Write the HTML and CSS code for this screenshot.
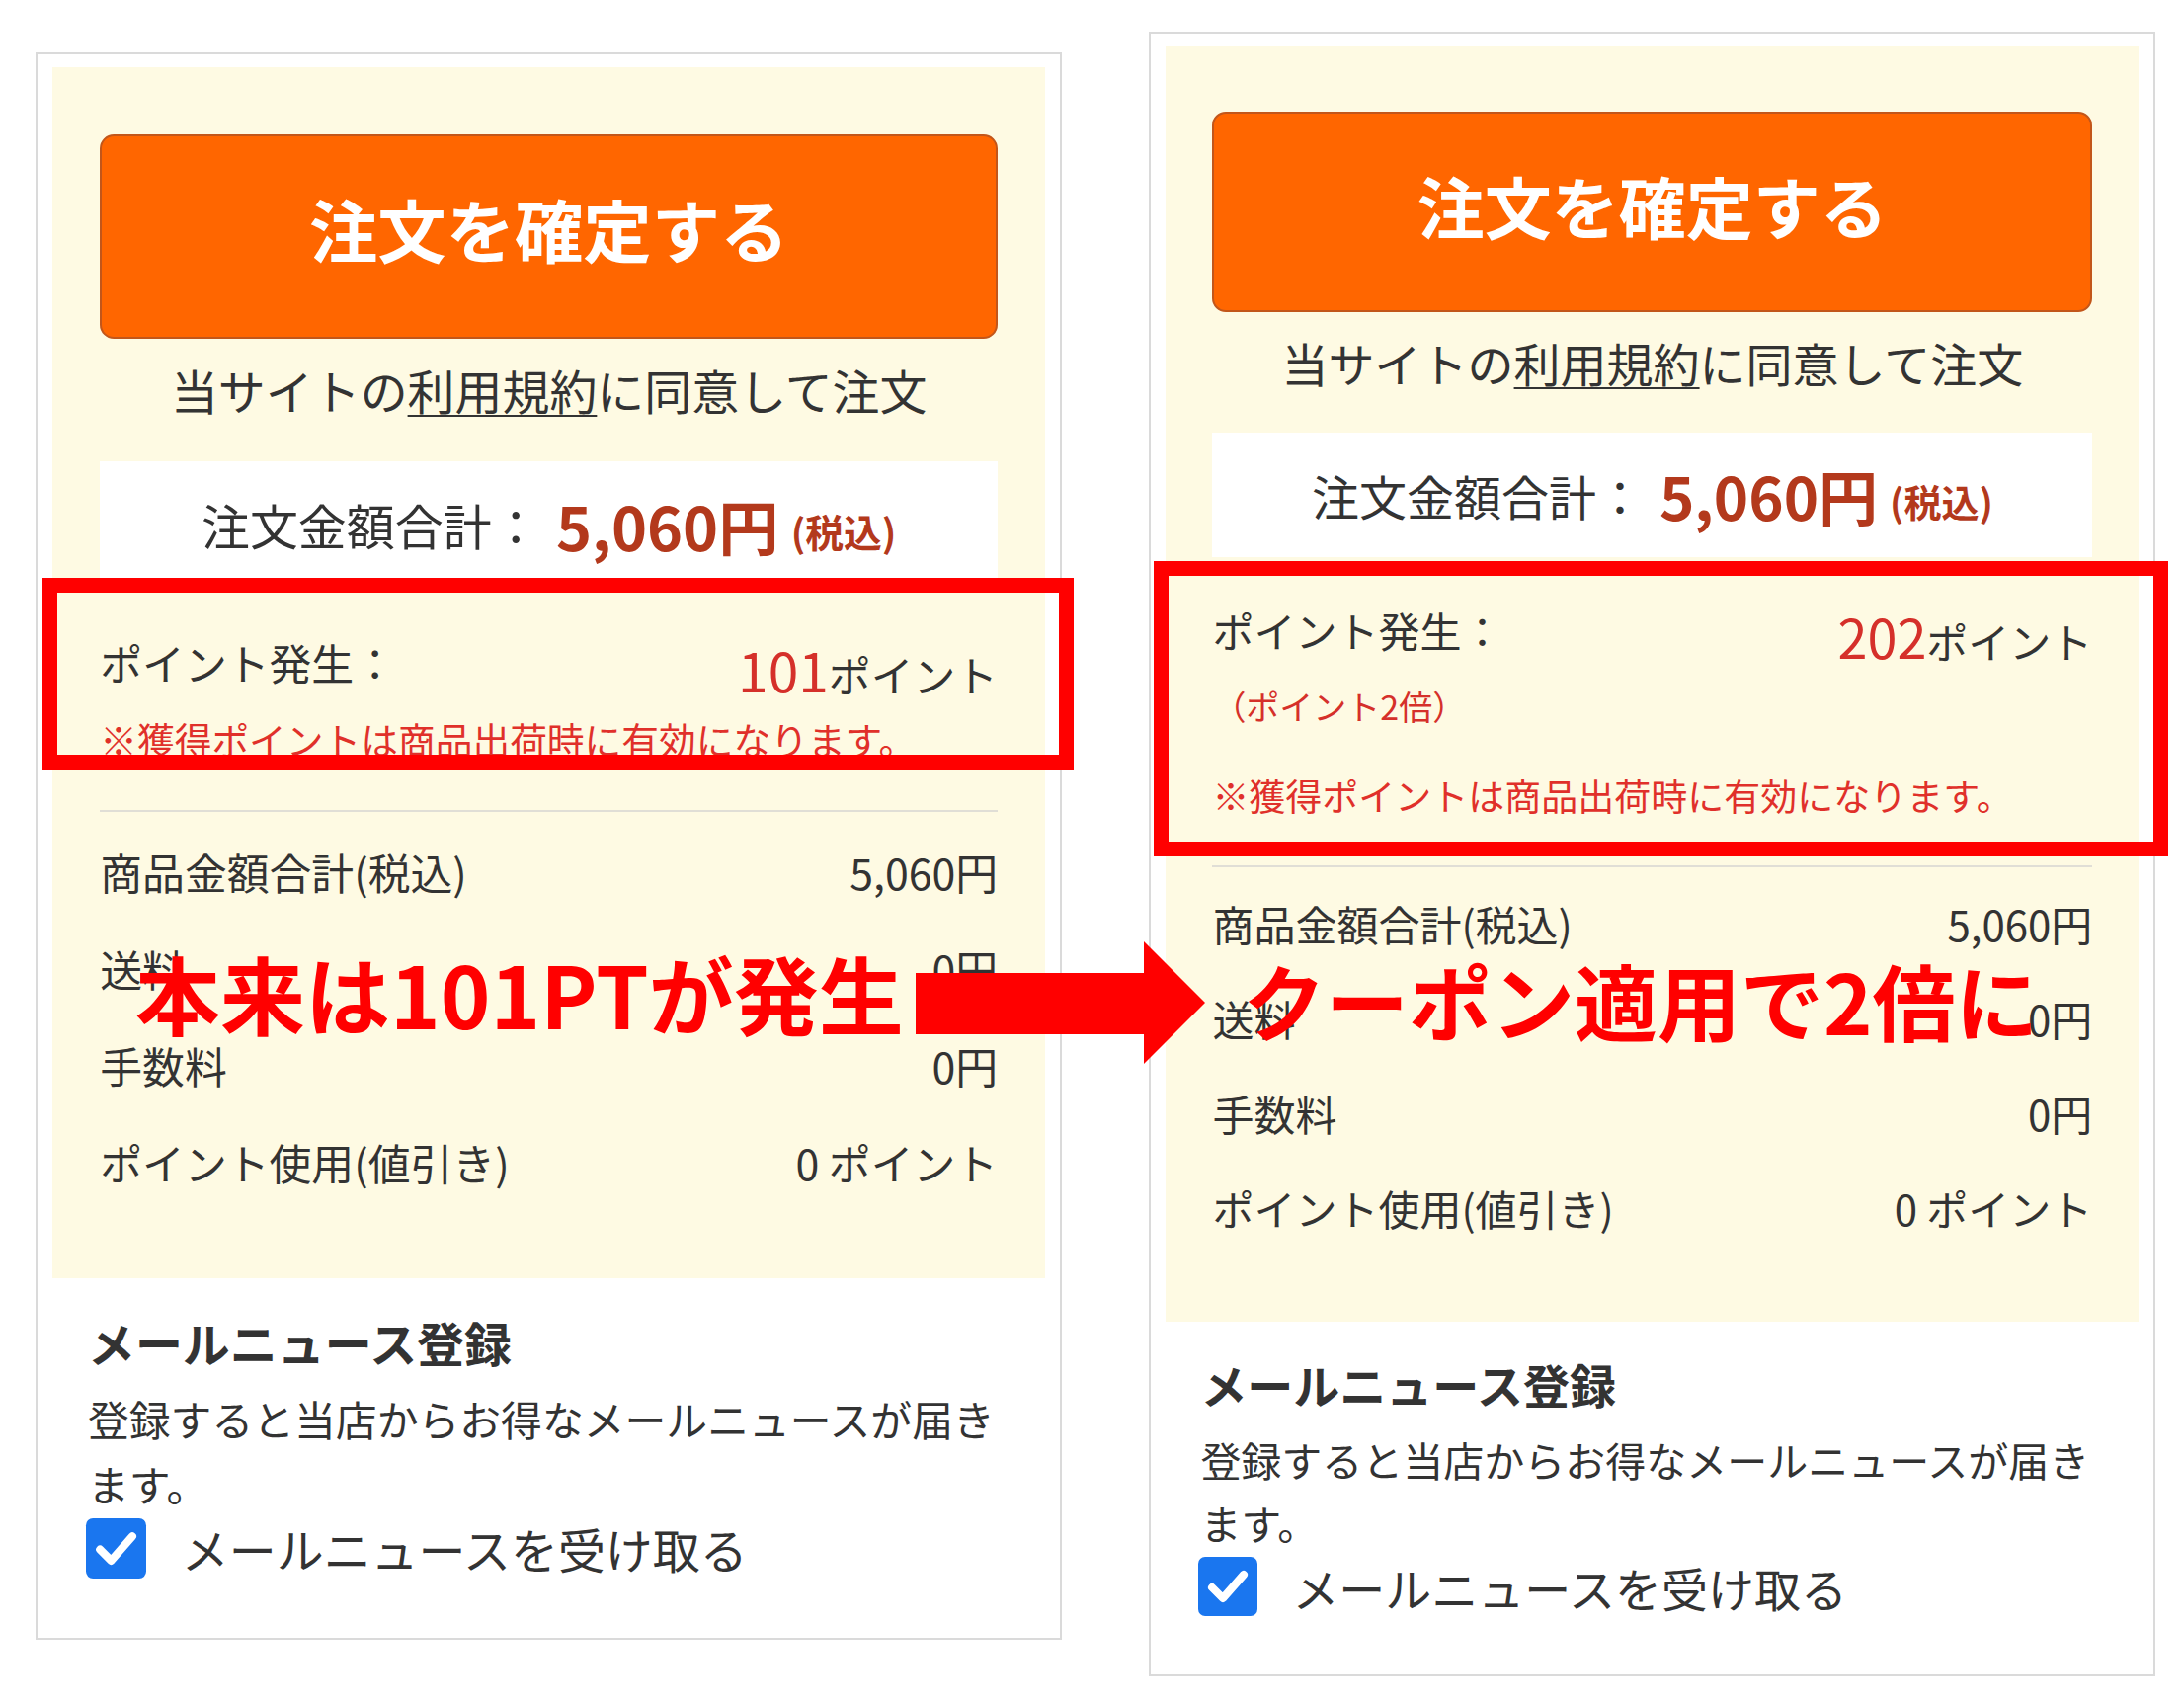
FILE: index.html
```html
<!DOCTYPE html>
<html lang="ja">
<head>
<meta charset="utf-8">
<title>注文確認</title>
<link rel="stylesheet" href="styles.css">
</head>
<body>
<div class="stage">
  <section class="panel panel--a">
    <div class="summary">
      <button class="confirm" type="button">注文を確定する</button>
      <p class="terms">当サイトの<a href="#">利用規約</a>に同意して注文</p>
      <div class="total">注文金額合計：<strong class="total__amount">5,060円</strong><span class="total__tax">(税込)</span></div>
      <div class="points">
        <div class="points__row"><span>ポイント発生：</span><span class="points__value"><em>101</em>ポイント</span></div>
        <p class="points__note">※獲得ポイントは商品出荷時に有効になります。</p>
      </div>
      <dl class="breakdown">
        <div class="breakdown__row"><dt>商品金額合計(税込)</dt><dd>5,060円</dd></div>
        <div class="breakdown__row"><dt>送料</dt><dd>0円</dd></div>
        <div class="breakdown__row"><dt>手数料</dt><dd>0円</dd></div>
        <div class="breakdown__row"><dt>ポイント使用(値引き)</dt><dd>0 ポイント</dd></div>
      </dl>
    </div>
    <div class="mail">
      <h3 class="mail__title">メールニュース登録</h3>
      <p class="mail__text">登録すると当店からお得なメールニュースが届きます。</p>
      <label class="mail__check"><span class="checkbox"><svg viewBox="0 0 60 60" width="60" height="60"><path d="M14 31 L25 42 L46 18" fill="none" stroke="#fff" stroke-width="8" stroke-linecap="round" stroke-linejoin="round"/></svg></span>メールニュースを受け取る</label>
    </div>
  </section>

  <section class="panel panel--b">
    <div class="summary">
      <button class="confirm" type="button">注文を確定する</button>
      <p class="terms">当サイトの<a href="#">利用規約</a>に同意して注文</p>
      <div class="total">注文金額合計：<strong class="total__amount">5,060円</strong><span class="total__tax">(税込)</span></div>
      <div class="points">
        <div class="points__row"><span>ポイント発生：</span><span class="points__value"><em>202</em>ポイント</span></div>
        <p class="points__mult">（ポイント2倍）</p>
        <p class="points__note">※獲得ポイントは商品出荷時に有効になります。</p>
      </div>
      <dl class="breakdown">
        <div class="breakdown__row"><dt>商品金額合計(税込)</dt><dd>5,060円</dd></div>
        <div class="breakdown__row"><dt>送料</dt><dd>0円</dd></div>
        <div class="breakdown__row"><dt>手数料</dt><dd>0円</dd></div>
        <div class="breakdown__row"><dt>ポイント使用(値引き)</dt><dd>0 ポイント</dd></div>
      </dl>
    </div>
    <div class="mail">
      <h3 class="mail__title">メールニュース登録</h3>
      <p class="mail__text">登録すると当店からお得なメールニュースが届きます。</p>
      <label class="mail__check"><span class="checkbox"><svg viewBox="0 0 60 60" width="60" height="60"><path d="M14 31 L25 42 L46 18" fill="none" stroke="#fff" stroke-width="8" stroke-linecap="round" stroke-linejoin="round"/></svg></span>メールニュースを受け取る</label>
    </div>
  </section>

  <div class="mark mark--a"></div>
  <div class="mark mark--b"></div>
  <p class="callout callout--a">本来は101PTが発生</p>
  <svg class="arrow" viewBox="0 0 293 124" width="293" height="124"><polygon points="0,32 231,32 231,0 293,62 231,124 231,94 0,94" fill="#ff0000"/></svg>
  <p class="callout callout--b">クーポン適用で2倍に</p>
</div>
</body>
</html>
```

FILE: styles.css
```css
html, body {
  margin: 0;
  padding: 0;
  background: #ffffff;
}

body {
  font-family: "Noto Sans CJK JP", "Noto Sans", sans-serif;
  color: #333333;
}

.stage {
  position: relative;
  width: 2211px;
  height: 1726px;
  box-sizing: border-box;
  padding-left: 36px;
  display: flex;
  align-items: flex-start;
  overflow: hidden;
}

.panel {
  width: 1019px;
  box-sizing: border-box;
  border: 2px solid #dadada;
  padding: 13px 15px 59px;
  background: #ffffff;
  flex: none;
}

.panel--a {
  zoom: 1.02;
  margin-top: 52px;
}

.panel--b {
  margin-top: 32px;
  margin-left: 88px;
}

.summary {
  background: #fefae3;
  padding: 66px 47px 67px;
}

.confirm {
  display: block;
  width: 100%;
  height: 203px;
  box-sizing: border-box;
  border: 2px solid #c2561a;
  border-radius: 14px;
  background: #ff6600;
  color: #ffffff;
  font-family: "Noto Sans CJK JP", sans-serif;
  font-weight: 700;
  font-size: 68px;
  line-height: 1;
  padding: 0 0 14px;
  cursor: pointer;
}

.terms {
  margin: 18px 0 0;
  text-align: center;
  font-size: 47px;
  line-height: 66px;
}

.terms a {
  color: inherit;
  text-decoration: underline;
  text-underline-offset: 5px;
  text-decoration-thickness: 2px;
}

.total {
  margin-top: 38px;
  height: 126px;
  background: #ffffff;
  display: flex;
  align-items: center;
  justify-content: center;
  font-size: 48px;
  line-height: 1;
}

.total__amount {
  margin-left: 16px;
  color: #b3391c;
  font-size: 60px;
  font-weight: 700;
}

.total__tax {
  margin-left: 12px;
  margin-top: 12px;
  color: #b3391c;
  font-size: 38px;
  font-weight: 700;
}

.points {
  margin-top: 44px;
}

.points__row {
  display: flex;
  justify-content: space-between;
  align-items: flex-start;
  font-size: 42px;
  line-height: 60px;
}

.points__value {
  margin-top: 6px;
}

.points__value em {
  font-style: normal;
  color: #d5302a;
  font-size: 54px;
}

.points__mult {
  margin: 11px 0 40px;
  color: #d5302a;
  font-size: 34px;
  line-height: 50px;
}

.points__note {
  margin: 9px 0 0;
  color: #e0302a;
  font-size: 37px;
  line-height: 50px;
}

.breakdown {
  margin: 46px 0 0;
  padding-top: 12px;
  border-top: 2px solid #e0ded6;
}

.panel--b .breakdown {
  padding-top: 9px;
}

.breakdown__row {
  display: flex;
  justify-content: space-between;
  font-size: 42px;
  line-height: 96px;
}

.breakdown__row dt,
.breakdown__row dd {
  margin: 0;
}

.mail {
  padding: 30px 40px 0 35px;
}

.mail__title {
  margin: 0;
  font-size: 47px;
  font-weight: 700;
  line-height: 66px;
}

.mail__text {
  margin: 11px 0 0;
  font-size: 41px;
  line-height: 64px;
}

.mail__check {
  display: flex;
  align-items: center;
  gap: 35px;
  height: 60px;
  margin-top: 3px;
  margin-left: -2px;
  font-size: 47px;
}

.checkbox {
  width: 60px;
  height: 60px;
  border-radius: 7px;
  background: #1a76ef;
  display: flex;
  align-items: center;
  justify-content: center;
  flex: none;
}

.mark {
  position: absolute;
  box-sizing: border-box;
  border: 15px solid #ff0000;
}

.mark--a {
  left: 43px;
  top: 585px;
  width: 1044px;
  height: 194px;
}

.mark--b {
  left: 1168px;
  top: 568px;
  width: 1027px;
  height: 299px;
}

.callout {
  position: absolute;
  margin: 0;
  color: #ff0000;
  font-weight: 700;
  line-height: 1;
  white-space: nowrap;
}

.callout--a {
  left: 137px;
  top: 962px;
  font-size: 86px;
}

.callout--b {
  left: 1258px;
  top: 970px;
  font-size: 84px;
}

.arrow {
  position: absolute;
  left: 927px;
  top: 953px;
}
```
